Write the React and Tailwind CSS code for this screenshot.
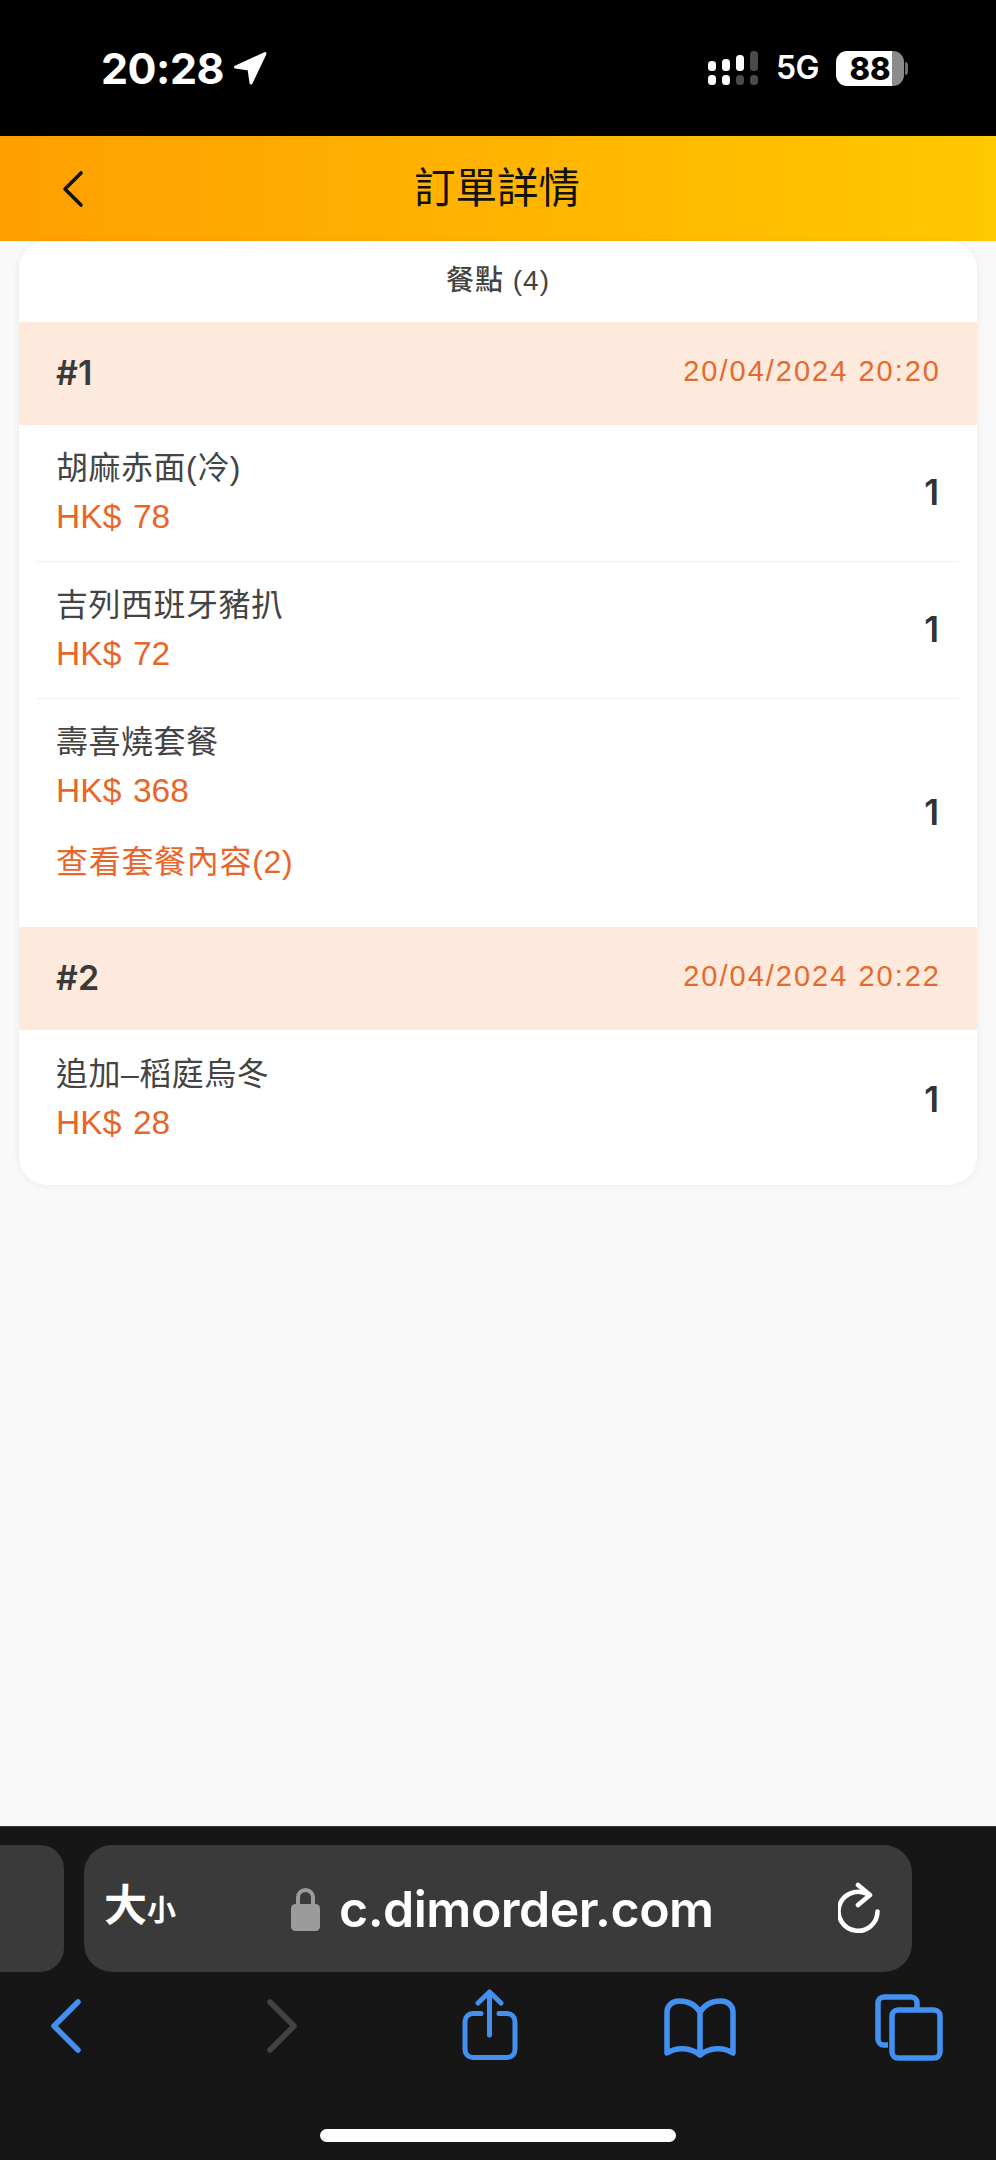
import React from 'react';

const sans = "font-['Liberation_Sans','Noto_Sans_CJK_TC',sans-serif]";

const sections = [
  {
    no: '#1',
    time: '20/04/2024 20:20',
    items: [
      { id: 1, name: '胡麻赤面(冷)', price: 78 },
      { id: 2, name: '吉列西班牙豬扒', price: 72 },
      { id: 3, name: '壽喜燒套餐', price: 368, link: '查看套餐內容(2)' },
    ],
  },
  {
    no: '#2',
    time: '20/04/2024 20:22',
    items: [{ id: 4, name: '追加–稻庭烏冬', price: 28 }],
  },
];

const StatusBar = () => (
  <div className="h-[136px] shrink-0 bg-black flex items-center justify-between pl-[101px] pr-[88px]">
    <div className="flex items-center gap-[9px] text-white">
      <span className="font-['Inter',sans-serif] font-bold text-[43px] leading-[40px] tracking-[-0.5px]">20:28</span>
      <svg width="34" height="34" viewBox="0 0 34 34" fill="#fff" stroke="#fff" strokeWidth="3" strokeLinejoin="round">
        <path d="M2.500 16 32 2.500 18 32 16 18z" />
      </svg>
    </div>
    <div className="flex items-center">
      <svg width="50" height="34" viewBox="0 0 50 34">
        <rect x="0" y="24" width="8" height="10" rx="3.5" fill="#fff" />
        <rect x="0" y="10" width="8" height="10" rx="3.5" fill="#fff" />
        <rect x="14" y="24" width="8" height="10" rx="3.5" fill="#fff" />
        <rect x="14" y="8" width="8" height="12" rx="3.5" fill="#fff" />
        <rect x="28" y="24" width="8" height="10" rx="3.5" fill="#4a4a4a" />
        <rect x="28" y="4" width="8" height="16" rx="3.5" fill="#fff" />
        <rect x="42" y="24" width="8" height="10" rx="3.5" fill="#4a4a4a" />
        <rect x="42" y="0" width="8" height="20" rx="3.5" fill="#4a4a4a" />
      </svg>
      <span className="ml-[18px] font-['Inter',sans-serif] font-semibold text-[32px] leading-[36px] text-white tracking-[-0.5px]">5G</span>
      <div className="ml-[17px] flex items-center">
        <div className="w-[68px] h-[35px] rounded-[11px] bg-[linear-gradient(90deg,#fff_82%,#8b8b8b_82%)] flex items-center justify-center">
          <span className="font-['Inter',sans-serif] font-extrabold text-[31px] leading-[35px] text-black">88</span>
        </div>
        <div className="w-[3px] h-[13px] ml-[1px] rounded-r-full bg-[#6f6f6f]" />
      </div>
    </div>
  </div>
);

const Header = () => (
  <div className="h-[105px] shrink-0 bg-linear-to-r from-[#ff9f00] to-[#ffc800] grid grid-cols-[1fr_auto_1fr] items-center pl-[60px] pr-[62px]">
    <svg width="26" height="38" viewBox="0 0 26 38" fill="none" stroke="#111" strokeWidth="3.6" strokeLinecap="round" strokeLinejoin="round">
      <path d="M21 3 5 19l16 16" />
    </svg>
    <h1 className={`${sans} text-[41.5px] leading-[50px] font-normal text-[#111]`}>訂單詳情</h1>
    <div />
  </div>
);

const ItemRow = ({ item, last }) => (
  <div className={`mx-[18px] pl-[19px] pr-[20px] flex items-center justify-between ${last ? '' : 'border-b border-[#f1f1f1]'} ${item.id === 4 ? 'pt-[21px] pb-[36px]' : ''}`}>
    <div className={item.id === 4 ? '' : item.link ? 'pt-[20px] pb-[42px]' : 'pt-[20px] pb-[18px]'}>
      <div className="text-[32px] leading-[46px] tracking-[0.5px] text-[#444]">{item.name}</div>
      <div className="text-[33.5px] leading-[52px] tracking-[0.1px] [word-spacing:2px] text-[#e8662a]">HK$ {item.price}</div>
      {item.link && <div className="mt-[22px] text-[32px] leading-[46px] tracking-[0.7px] text-[#e8662a]">{item.link}</div>}
    </div>
    <span className="mb-[3px] font-['Inter',sans-serif] text-[35px] leading-[46px] font-semibold text-[#333]">1</span>
  </div>
);

const Card = () => (
  <div className={`${sans} mx-[19px] bg-white rounded-[28px] shadow-[0_1px_8px_rgba(0,0,0,0.06)] overflow-hidden`}>
    <div className="h-[81px] pb-[2px] flex items-center justify-center text-[28px] tracking-[1px] font-medium text-[#444]">餐點 (4)</div>
    {sections.map((section) => (
      <div key={section.no}>
        <div className="h-[103px] pb-[3px] bg-[#fdeadc] flex items-center justify-between pl-[37px] pr-[38px]">
          <span className="font-['Inter',sans-serif] text-[34px] font-semibold text-[#3a3a3a]">{section.no}</span>
          <span className="text-[29px] tracking-[2px] -mr-[2px] text-[#e46a2e]">{section.time}</span>
        </div>
        {section.items.map((item, i) => (
          <ItemRow key={item.id} item={item} last={i === section.items.length - 1} />
        ))}
      </div>
    ))}
  </div>
);

const BottomBar = () => (
  <div className="h-[334px] shrink-0 bg-[#161616] border-t border-[#3a3a3a] flex flex-col">
    <div className="flex gap-[20px] pt-[18px]">
      <div className="w-[64px] h-[127px] rounded-r-[24px] bg-[#3a3a3a]" />
      <div className="w-[828px] h-[127px] rounded-[28px] bg-[#3a3a3a] flex items-center pl-[20px] pr-[30px] text-white">
        <span className={`${sans} w-[187px] font-semibold flex items-baseline`}>
          <span className="text-[43px] leading-[50px]">大</span>
          <span className="text-[29px] leading-[50px]">小</span>
        </span>
        <svg width="29" height="44" viewBox="0 0 29 44" fill="#9b9b9b">
          <path d="M5 19v-8.500a9.500 9.500 0 0 1 19 0v8.500h-4v-8.500a5.500 5.500 0 0 0-11 0v8.500z" />
          <rect x="0" y="17" width="29" height="27" rx="4.500" />
        </svg>
        <span className="ml-[19px] font-['Inter',sans-serif] font-semibold text-[50px] leading-[60px] tracking-[-0.5px]">c.dimorder.com</span>
        <svg className="ml-auto" width="44" height="54" viewBox="0 0 44 54" fill="none" stroke="#fff" strokeWidth="4.600" strokeLinecap="round" strokeLinejoin="round">
          <path d="M39.500 29.500A19.500 19.500 0 1 1 28 11.500" />
          <path d="M20 3l12 10-12 10" />
        </svg>
      </div>
    </div>
    <div className="flex items-start pl-[50px] pt-[17px] h-[89px]">
      <svg width="32" height="54" viewBox="0 0 32 54" fill="none" stroke="#4290f2" strokeWidth="5.500" strokeLinecap="round" strokeLinejoin="round" className="mt-[10px]">
        <path d="M28 3 4 27l24 24" />
      </svg>
      <svg width="32" height="54" viewBox="0 0 32 54" fill="none" stroke="#434343" strokeWidth="5.500" strokeLinecap="round" strokeLinejoin="round" className="mt-[10px] ml-[184px]">
        <path d="m4 3 24 24L4 51" />
      </svg>
      <svg width="56" height="72" viewBox="0 0 56 72" fill="none" stroke="#4290f2" strokeWidth="5" strokeLinecap="round" strokeLinejoin="round" className="ml-[164px]">
        <path d="M19 24.500H11a8 8 0 0 0-8 8V60.500a8 8 0 0 0 8 8H45a8 8 0 0 0 8-8V32.500a8 8 0 0 0-8-8H37" />
        <path d="M27.500 46V4M16 14 27.500 3 39 14" />
      </svg>
      <svg width="72" height="60" viewBox="0 0 72 60" fill="none" stroke="#4290f2" strokeWidth="5.500" strokeLinecap="round" strokeLinejoin="round" className="mt-[9px] ml-[146px]">
        <path d="M36 14C31 6 24 3 15 3 8 3 3 8 3 14v41c9-6 23-6 33 2 10-8 24-8 33-2V14c0-6-5-11-12-11-9 0-16 3-21 11zM36 14v41" />
      </svg>
      <svg width="68" height="67" viewBox="0 0 68 67" fill="none" stroke="#4290f2" strokeWidth="5.500" strokeLinejoin="round" className="mt-[5px] ml-[139px]">
        <path d="M13 51H9a6 6 0 0 1-6-6V9a6 6 0 0 1 6-6h27a6 6 0 0 1 6 6v6" />
        <rect x="17" y="16" width="48" height="48" rx="6" />
      </svg>
    </div>
    <div className="flex-1 flex justify-center pt-[68px]">
      <div className="w-[356px] h-[13px] rounded-full bg-white" />
    </div>
  </div>
);

const App = () => (
  <div className="w-[996px] h-[2160px] bg-[#f9f9f9] flex flex-col overflow-hidden">
    <StatusBar />
    <Header />
    <div className="flex-1">
      <Card />
    </div>
    <BottomBar />
  </div>
);

export default App;
